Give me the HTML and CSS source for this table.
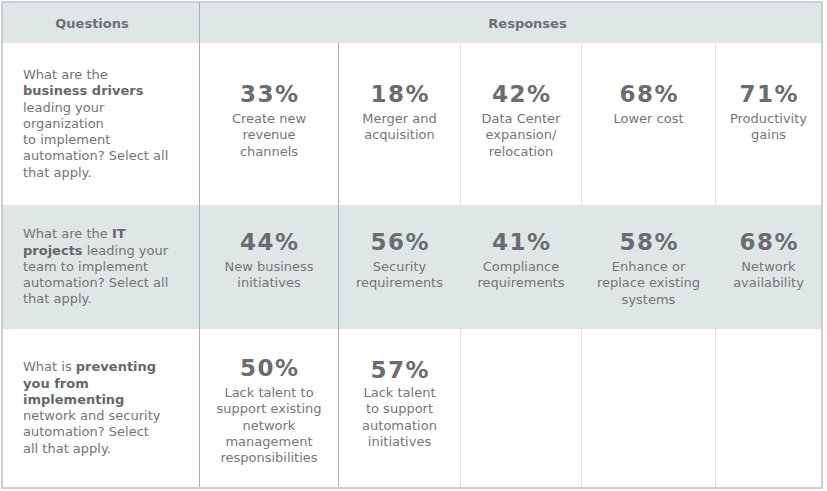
FILE: index.html
```html
<!DOCTYPE html>
<html lang="en">
<head>
<meta charset="utf-8">
<title>Automation survey</title>
<link rel="stylesheet" href="styles.css">
</head>
<body>
<div class="survey">
  <div class="row row-head">
    <div class="head head-q">Questions</div>
    <div class="head head-r">Responses</div>
  </div>

  <div class="row row-1">
    <div class="question"><p class="q-text">What are the<br><b>business drivers</b><br>leading your<br>organization<br>to implement<br>automation? Select all<br>that apply.</p></div>
    <div class="resp dark"><div class="pct">33%</div><div class="label">Create new<br>revenue<br>channels</div></div>
    <div class="resp dark"><div class="pct">18%</div><div class="label">Merger and<br>acquisition</div></div>
    <div class="resp"><div class="pct">42%</div><div class="label">Data Center<br>expansion/<br>relocation</div></div>
    <div class="resp"><div class="pct">68%</div><div class="label">Lower cost</div></div>
    <div class="resp"><div class="pct">71%</div><div class="label">Productivity<br>gains</div></div>
  </div>

  <div class="row row-2">
    <div class="question"><p class="q-text">What are the <b>IT</b><br><b>projects</b> leading your<br>team to implement<br>automation? Select all<br>that apply.</p></div>
    <div class="resp dark"><div class="pct">44%</div><div class="label">New business<br>initiatives</div></div>
    <div class="resp dark"><div class="pct">56%</div><div class="label">Security<br>requirements</div></div>
    <div class="resp"><div class="pct">41%</div><div class="label">Compliance<br>requirements</div></div>
    <div class="resp"><div class="pct">58%</div><div class="label">Enhance or<br>replace existing<br>systems</div></div>
    <div class="resp"><div class="pct">68%</div><div class="label">Network<br>availability</div></div>
  </div>

  <div class="row row-3">
    <div class="question"><p class="q-text">What is <b>preventing</b><br><b>you from</b><br><b>implementing</b><br>network and security<br>automation? Select<br>all that apply.</p></div>
    <div class="resp dark"><div class="pct">50%</div><div class="label">Lack talent to<br>support existing<br>network<br>management<br>responsibilities</div></div>
    <div class="resp dark"><div class="pct pct-low">57%</div><div class="label">Lack talent<br>to support<br>automation<br>initiatives</div></div>
    <div class="resp"></div>
    <div class="resp"></div>
    <div class="resp"></div>
  </div>
</div>
</body>
</html>
```

FILE: styles.css
```css
* {
  box-sizing: border-box;
}

body {
  margin: 0;
  background: #ffffff;
  font-family: "DejaVu Sans", Verdana, sans-serif;
  color: #737373;
}

.survey {
  width: 822px;
  margin: 1px 0 0 1px;
  border: 2px solid #c9ced7;
}

.row {
  display: grid;
  grid-template-columns: 196px 139px 122px 121px 134px 106px;
}

.row-head {
  height: 40px;
  background: #dfe6e6;
}

.row-1 {
  height: 162px;
  background: #ffffff;
}

.row-2 {
  height: 124px;
  background: #dfe6e6;
}

.row-3 {
  height: 158px;
  background: #ffffff;
}

.head {
  display: flex;
  align-items: center;
  justify-content: center;
  font-size: 13px;
  font-weight: bold;
  color: #6b7174;
}

.head-q {
  padding-right: 18px;
}

.head-r {
  grid-column: span 5;
  border-left: 1px solid #a7aebd;
  padding-left: 34px;
}

.question {
  display: flex;
  align-items: center;
  padding-left: 20px;
}

.q-text {
  margin: 0;
  font-size: 13px;
  line-height: 16.25px;
  white-space: nowrap;
  color: #747474;
}

.q-text b {
  color: #65686a;
}

.resp {
  border-left: 1px solid #dde0e7;
  text-align: center;
}

.resp.dark {
  border-left-color: #a7aebd;
}

.row-1 .resp {
  padding-top: 36px;
}

.row-2 .resp {
  padding-top: 22px;
}

.row-3 .resp {
  padding-top: 24px;
}

.pct {
  font-size: 23px;
  font-weight: bold;
  line-height: 30px;
  letter-spacing: 1.5px;
  padding-left: 1.5px;
  color: #696d70;
}

.pct-low {
  margin-top: 2px;
  margin-bottom: -2px;
}

.label {
  margin-top: 2px;
  font-size: 13px;
  line-height: 16.25px;
  white-space: nowrap;
  color: #767676;
}
```
